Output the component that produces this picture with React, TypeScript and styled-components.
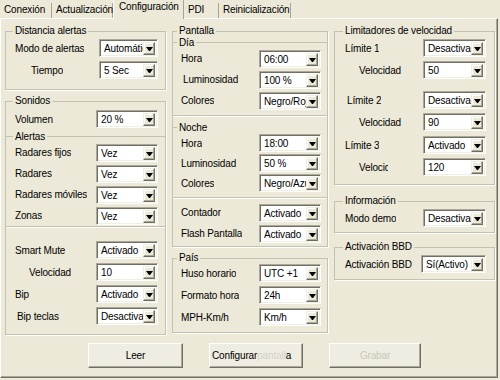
import styled, { createGlobalStyle } from 'styled-components'

const GlobalStyle = createGlobalStyle`
  html, body { margin: 0; padding: 0; }
  body {
    background: #ECE9D8;
    font-family: "Liberation Sans", Arial, sans-serif;
    font-size: 10px;
    letter-spacing: -0.15px;
    color: #000;
  }
  * { box-sizing: border-box; }
`

const Window = styled.div`
  width: 500px;
  height: 380px;
  overflow: hidden;
`

const TabStrip = styled.div`
  display: flex;
  align-items: flex-end;
  height: 18px;
  position: relative;
  z-index: 1;
`

const Tab = styled.div<{ $w: number; $active?: boolean }>`
  width: ${p => p.$w}px;
  height: ${p => (p.$active ? 19 : 15)}px;
  margin-bottom: ${p => (p.$active ? -1 : 0)}px;
  padding: ${p => (p.$active ? '1px 0 0 5px' : '1px 0 0 4px')};
  line-height: 12px;
  background: #ECE9D8;
  border-right: 1px solid #A7A596;
  border-left: ${p => (p.$active ? '1px solid #fff' : 'none')};
  white-space: nowrap;
`

const Panel = styled.div`
  width: 498px;
  height: 360px;
  border-top: 1px solid #fff;
  border-left: 1px solid #fff;
  border-right: 1px solid #716F64;
  border-bottom: 1px solid #716F64;
  box-shadow: inset -1px -1px 0 #ACA899;
  padding: 6px 0 0 4px;
  display: flex;
  flex-direction: column;
`

const Columns = styled.div`
  display: grid;
  grid-template-columns: 161px 156px 161px;
  column-gap: 6px;
  align-items: start;
`

const Column = styled.div`
  display: flex;
  flex-direction: column;
`

const Box = styled.fieldset<{ $pad: string; $mt?: number }>`
  margin: ${p => p.$mt ?? 0}px 0 0 0;
  padding: ${p => p.$pad};
  border: 1px solid #C4C1B1;
  box-shadow: 1px 1px 0 #fff;
  min-width: 0;
`

const Legend = styled.legend<{ $ml?: number }>`
  padding: 0 2px;
  margin-left: ${p => p.$ml ?? -2}px;
  line-height: 12px;
`

const SubLegend = styled.div<{ $l: number; $r: number; $dash: number; $h: number; $mt?: number; $noLine?: boolean }>`
  display: flex;
  align-items: center;
  height: ${p => p.$h}px;
  margin: ${p => p.$mt ?? 0}px -${p => p.$r}px 0 -${p => p.$l}px;
  &::before {
    content: '';
    width: ${p => p.$dash}px;
    border-top: 1px solid #C4C1B1;
  }
  &::after {
    content: '';
    flex: 1;
    border-top: ${p => (p.$noLine ? 'none' : '1px solid #C4C1B1')};
  }
  span {
    padding: 0 2px;
  }
`

const Divider = styled.div<{ $l: number; $r: number; $mt?: number; $mb?: number }>`
  height: 2px;
  border-top: 1px solid #C4C1B1;
  border-bottom: 1px solid #fff;
  margin: ${p => p.$mt ?? 0}px -${p => p.$r}px ${p => p.$mb ?? 0}px -${p => p.$l}px;
`

const Row = styled.div<{ $h?: number; $indent?: number; $mt?: number }>`
  display: flex;
  align-items: center;
  justify-content: space-between;
  height: ${p => p.$h ?? 22}px;
  margin-top: ${p => p.$mt ?? 0}px;
  padding-left: ${p => p.$indent ?? 0}px;
`

const Label = styled.span<{ $clip?: number }>`
  white-space: nowrap;
  overflow: hidden;
  max-width: ${p => (p.$clip ? `${p.$clip}px` : 'none')};
`

const SelectBox = styled.div<{ $w: number }>`
  width: ${p => p.$w}px;
  height: 18px;
  flex-shrink: 0;
  display: flex;
  align-items: center;
  background: #fff;
  border: 1px solid;
  border-color: #ACA899 #fff #fff #ACA899;
  box-shadow: inset 1px 1px 0 #716F64, inset -1px -1px 0 #F1EFE2;
  padding: 2px 2px 1px 2px;
`

const SelectValue = styled.span`
  flex: 1;
  min-width: 0;
  overflow: hidden;
  white-space: nowrap;
  padding-left: 2px;
`

const ArrowButton = styled.span`
  width: 12px;
  height: 13px;
  flex-shrink: 0;
  background: #ECE9D8;
  border: 1px solid;
  border-color: #F1EFE2 #716F64 #716F64 #F1EFE2;
  box-shadow: inset -1px -1px 0 #ACA899, inset 1px 1px 0 #fff;
  display: flex;
  align-items: center;
  justify-content: center;
  padding-top: 1px;
  &::after {
    content: '';
    width: 1px;
    border-left: 3px solid transparent;
    border-right: 3px solid transparent;
    border-top: 4px solid #000;
  }
`

const ButtonRow = styled.div`
  display: flex;
  gap: 26px;
  margin-top: 8px;
  padding-left: 83px;
`

const Button = styled.div<{ $w: number; $left?: boolean; $disabled?: boolean }>`
  width: ${p => p.$w}px;
  height: 25px;
  display: flex;
  align-items: center;
  justify-content: ${p => (p.$left ? 'flex-start' : 'center')};
  padding: 0 2px;
  overflow: hidden;
  white-space: nowrap;
  background: #EFEDE2;
  border: 1px solid;
  border-color: #fff #716F64 #716F64 #fff;
  box-shadow: inset -1px -1px 0 #ACA899;
  color: ${p => (p.$disabled ? '#C9C6B8' : '#000')};
`

const Faded = styled.span`
  color: #D4D2C8;
`

function Select({ value, w = 62 }: { value: string; w?: number }) {
  return (
    <SelectBox $w={w}>
      <SelectValue>{value}</SelectValue>
      <ArrowButton />
    </SelectBox>
  )
}

export default function App() {
  return (
    <Window>
      <GlobalStyle />
      <TabStrip>
        <Tab $w={52}>Conexión</Tab>
        <Tab $w={61}>Actualización</Tab>
        <Tab $w={71} $active>Configuración</Tab>
        <Tab $w={35}>PDI</Tab>
        <Tab $w={72}>Reinicialización</Tab>
      </TabStrip>
      <Panel>
        <Columns>
          <Column>
            <Box $pad="0 7px 8px 9px">
              <Legend>Distancia alertas</Legend>
              <Row>
                <Label>Modo de alertas</Label>
                <Select value="Automático" w={59} />
              </Row>
              <Row $indent={16}>
                <Label>Tiempo</Label>
                <Select value="5 Sec" w={59} />
              </Row>
            </Box>
            <Box $pad="1px 7px 7px 9px" $mt={5}>
              <Legend>Sonidos</Legend>
              <Row>
                <Label>Volumen</Label>
                <Select value="20 %" />
              </Row>
              <SubLegend $l={9} $r={7} $dash={7} $h={12}>
                <span>Alertas</span>
              </SubLegend>
              <Row $h={21}>
                <Label>Radares fijos</Label>
                <Select value="Vez" />
              </Row>
              <Row $h={21}>
                <Label>Radares</Label>
                <Select value="Vez" />
              </Row>
              <Row $h={21}>
                <Label>Radares móviles</Label>
                <Select value="Vez" />
              </Row>
              <Row $h={21}>
                <Label>Zonas</Label>
                <Select value="Vez" />
              </Row>
              <Divider $l={9} $r={7} $mb={11} />
              <Row>
                <Label>Smart Mute</Label>
                <Select value="Activado" />
              </Row>
              <Row $indent={14}>
                <Label>Velocidad</Label>
                <Select value="10" />
              </Row>
              <Row>
                <Label>Bip</Label>
                <Select value="Activado" />
              </Row>
              <Row $indent={2}>
                <Label>Bip teclas</Label>
                <Select value="Desactivado" />
              </Row>
            </Box>
          </Column>

          <Column>
            <Box $pad="0 6px 2px 8px">
              <Legend $ml={-4}>Pantalla</Legend>
              <SubLegend $l={8} $r={6} $dash={4} $h={11}>
                <span>Día</span>
              </SubLegend>
              <Row $h={21}>
                <Label>Hora</Label>
                <Select value="06:00" />
              </Row>
              <Row $h={21} $indent={2}>
                <Label>Luminosidad</Label>
                <Select value="100 %" />
              </Row>
              <Row $h={21}>
                <Label>Colores</Label>
                <Select value="Negro/Rojo" />
              </Row>
              <Divider $l={8} $r={6} $mt={4} />
              <SubLegend $l={8} $r={6} $dash={4} $h={12} $mt={4} $noLine>
                <span>Noche</span>
              </SubLegend>
              <Row $h={20}>
                <Label>Hora</Label>
                <Select value="18:00" />
              </Row>
              <Row $h={20}>
                <Label>Luminosidad</Label>
                <Select value="50 %" />
              </Row>
              <Row $h={20}>
                <Label>Colores</Label>
                <Select value="Negro/Azul" />
              </Row>
              <Divider $l={8} $r={6} $mt={4} />
              <Row $h={21} $mt={3}>
                <Label>Contador</Label>
                <Select value="Activado" />
              </Row>
              <Row $h={21}>
                <Label>Flash Pantalla</Label>
                <Select value="Activado" />
              </Row>
            </Box>
            <Box $pad="0 6px 4px 8px" $mt={5}>
              <Legend $ml={-4}>País</Legend>
              <Row $mt={-2}>
                <Label>Huso horario</Label>
                <Select value="UTC +1" />
              </Row>
              <Row>
                <Label>Formato hora</Label>
                <Select value="24h" />
              </Row>
              <Row>
                <Label>MPH-Km/h</Label>
                <Select value="Km/h" />
              </Row>
            </Box>
          </Column>

          <Column>
            <Box $pad="0 8px 6px 10px">
              <Legend>Limitadores de velocidad</Legend>
              <Row>
                <Label>Límite 1</Label>
                <Select value="Desactivado" w={63} />
              </Row>
              <Row $indent={14}>
                <Label>Velocidad</Label>
                <Select value="50" w={63} />
              </Row>
              <Row $mt={8} $indent={2}>
                <Label>Límite 2</Label>
                <Select value="Desactivado" w={63} />
              </Row>
              <Row $indent={14}>
                <Label>Velocidad</Label>
                <Select value="90" w={63} />
              </Row>
              <Row $mt={1}>
                <Label>Límite 3</Label>
                <Select value="Activado" w={63} />
              </Row>
              <Row $indent={14}>
                <Label $clip={29}>Velocidad</Label>
                <Select value="120" w={63} />
              </Row>
            </Box>
            <Box $pad="0 8px 3px 10px" $mt={10}>
              <Legend>Información</Legend>
              <Row>
                <Label>Modo demo</Label>
                <Select value="Desactivado" w={63} />
              </Row>
            </Box>
            <Box $pad="0 8px 4px 10px" $mt={8}>
              <Legend>Activación BBD</Legend>
              <Row>
                <Label>Activación BBD</Label>
                <Select value="Sí(Activo)" w={65} />
              </Row>
            </Box>
          </Column>
        </Columns>

        <ButtonRow>
          <Button $w={95}>Leer</Button>
          <Button $w={94} $left>
            Configurar <Faded>pantall</Faded>a
          </Button>
          <Button $w={92} $disabled>Grabar</Button>
        </ButtonRow>
      </Panel>
    </Window>
  )
}
